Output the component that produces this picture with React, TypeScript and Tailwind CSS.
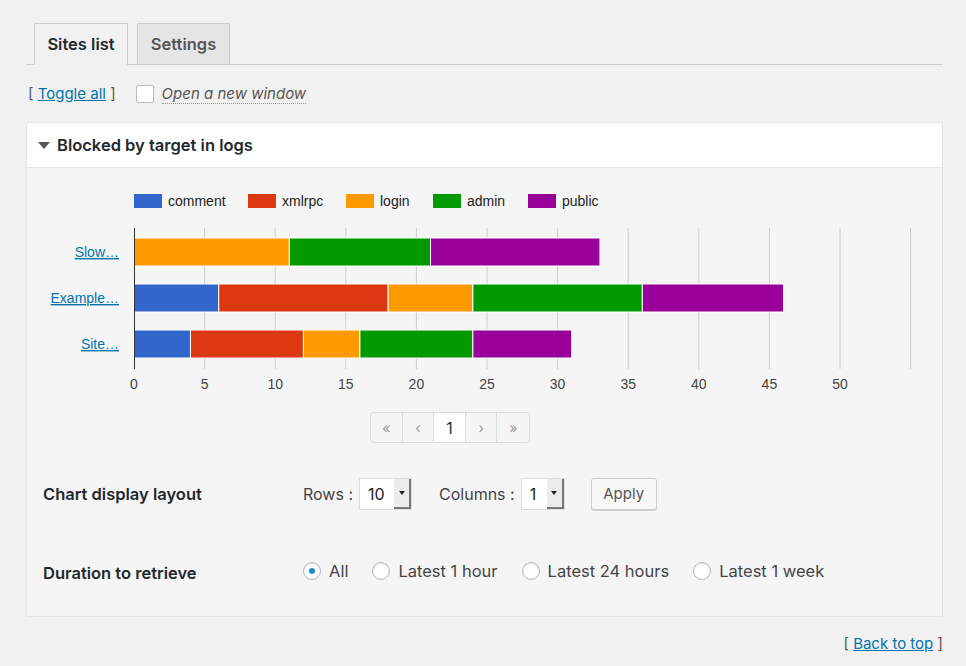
import React from "react";

type Row = { label: string; values: number[] };

const SERIES = [
	{ name: "comment", color: "#3366cc", x: 107 },
	{ name: "xmlrpc", color: "#dc3912", x: 221 },
	{ name: "login", color: "#ff9900", x: 319 },
	{ name: "admin", color: "#009900", x: 406 },
	{ name: "public", color: "#990099", x: 501 },
];

const ROWS: Row[] = [
	{ label: "Slow…", values: [0, 0, 11, 10, 12] },
	{ label: "Example…", values: [6, 12, 6, 12, 10] },
	{ label: "Site…", values: [4, 8, 4, 8, 7] },
];

const X0 = 107;
const UNIT = 14.12;
const ROW_TOP = [70, 116, 162];

const Chart: React.FC = () => {
	const ticks = Array.from({ length: 12 }, (_, i) => i * 5);
	return (
		<svg width={915} height={232} className="block" style={{ fontFamily: '"Liberation Sans", Arial, sans-serif' }}>
			{/* legend */}
			{SERIES.map((s) => (
				<g key={s.name}>
					<rect x={s.x} y={26} width={28} height={14} fill={s.color} />
					<text x={s.x + 34} y={38} fontSize={14} fill="#222">
						{s.name}
					</text>
				</g>
			))}

			{/* grid */}
			{ticks.slice(1).map((t) => (
				<line key={t} x1={X0 + t * UNIT} x2={X0 + t * UNIT} y1={60} y2={201} stroke="#cccccc" strokeWidth={1} />
			))}

			{/* bars */}
			{ROWS.map((row, ri) => {
				let acc = 0;
				return (
					<g key={row.label}>
						{row.values.map((v, si) => {
							const start = acc;
							acc += v;
							if (!v) return null;
							return (
								<rect
									key={si}
									x={X0 + start * UNIT}
									y={ROW_TOP[ri]}
									width={v * UNIT}
									height={28}
									fill={SERIES[si].color}
									stroke="#ffffff"
									strokeWidth={1}
								/>
							);
						})}
						<text
							x={92}
							y={ROW_TOP[ri] + 19}
							fontSize={14}
							fill="#0073aa"
							textAnchor="end"
							textDecoration="underline"
							className="underline">
							{row.label}
						</text>
					</g>
				);
			})}

			<line x1={X0 + 0.5} x2={X0 + 0.5} y1={60} y2={201} stroke="#333333" strokeWidth={1} />

			{/* axis labels */}
			{ticks.slice(0, 11).map((t) => (
				<text key={t} x={X0 + t * UNIT} y={221} fontSize={14} fill="#444" textAnchor="middle">
					{t}
				</text>
			))}
		</svg>
	);
};

const Select: React.FC<{ value: string; width: string }> = ({ value, width }) => (
	<div className={`flex h-8 ${width} items-stretch border border-[#dddddd] bg-white`}>
		<span className="flex flex-1 items-center pl-2 text-[16px] text-[#222]">{value}</span>
		<span className="flex w-[17px] items-center justify-center border-r-2 border-b-2 border-[#777] bg-[#ececec]">
			<span className="h-0 w-0 border-x-[3.5px] border-t-[4px] border-x-transparent border-t-[#222]" />
		</span>
	</div>
);

const Radio: React.FC<{ label: string; checked?: boolean }> = ({ label, checked }) => (
	<label className="flex items-center gap-2 text-[16.5px] text-[#444]">
		<span className="flex h-[18px] w-[18px] items-center justify-center rounded-full border border-[#b4b9be] bg-white shadow-[inset_0_1px_2px_rgba(0,0,0,0.1)]">
			{checked && <span className="h-[6px] w-[6px] rounded-full bg-[#1e8cbe]" />}
		</span>
		{label}
	</label>
);

const pageBtn = "flex w-8 items-center justify-center border-r border-[#dddddd] last:border-r-0";

export default function App() {
	return (
		<div
			className="min-h-[666px] bg-[#f1f1f1] pt-[23px] pl-[26px] pr-[23px] text-[#444]"
			style={{ fontFamily: 'Inter, "Liberation Sans", Arial, sans-serif' }}>
			{/* tabs */}
			<div className="flex h-[42px] items-end gap-[9px] border-b border-[#cccccc] pl-2">
				<div className="-mb-px flex h-[42px] w-[94px] items-center justify-center border border-b-0 border-[#cccccc] bg-[#f1f1f1] text-[16.5px] font-semibold text-[#23282d]">
					Sites list
				</div>
				<div className="-mb-px flex h-[42px] w-[93px] items-center justify-center border border-[#cccccc] bg-[#e5e5e5] text-[16.5px] font-semibold text-[#555]">
					Settings
				</div>
			</div>

			{/* toggles */}
			<div className="mt-5 flex h-[18px] items-center pl-[2px] text-[15px]">
				<span className="text-[#555]">
					[ <a className="text-[#0073aa] underline">Toggle all</a> ]
				</span>
				<span className="ml-5 h-[18px] w-[18px] rounded-[2px] border border-[#b4b9be] bg-white" />
				<span className="ml-2 border-b border-dotted border-[#999] text-[15px] leading-[18px] italic text-[#555]">
					Open a new window
				</span>
			</div>

			{/* panel */}
			<div className="mt-[19px] border border-[#e5e5e5] bg-[#f5f5f5]">
				<div className="flex h-[45px] items-center border-b border-[#e5e5e5] bg-white pl-[11px]">
					<span className="h-0 w-0 border-x-[6px] border-t-[7px] border-x-transparent border-t-[#555]" />
					<span className="ml-[7px] text-[16.5px] font-semibold text-[#23282d]">Blocked by target in logs</span>
				</div>

				<Chart />

				<div className="mt-3 ml-[343px] flex h-[31px] w-[160px] rounded-[4px] border border-[#dddddd] text-[14px] text-[#999]">
					<span className={pageBtn}>«</span>
					<span className={pageBtn}>‹</span>
					<span className={`${pageBtn} bg-white text-[16px] text-[#333]`}>1</span>
					<span className={pageBtn}>›</span>
					<span className={pageBtn}>»</span>
				</div>

				<div className="mt-[35px] grid grid-cols-[260px_1fr] items-center pl-4">
					<div className="text-[16.5px] font-semibold text-[#23282d]">Chart display layout</div>
					<div className="flex h-8 items-center text-[16px] text-[#444]">
						<span>Rows :</span>
						<div className="ml-[6px]">
							<Select value="10" width="w-[53px]" />
						</div>
						<span className="ml-[27px]">Columns :</span>
						<div className="ml-[6px]">
							<Select value="1" width="w-[44px]" />
						</div>
						<button className="ml-[26px] h-8 w-[66px] rounded-[3px] border border-[#cccccc] bg-[#f7f7f7] text-[15px] text-[#555] shadow-[0_1px_0_#ccc]">
							Apply
						</button>
					</div>
				</div>

				<div className="mt-[46px] mb-[30px] grid grid-cols-[260px_1fr] items-center pl-4">
					<div className="pt-[5px] text-[16.5px] font-semibold text-[#23282d]">Duration to retrieve</div>
					<div className="flex h-[22px] items-center gap-[24px]">
						<Radio label="All" checked />
						<Radio label="Latest 1 hour" />
						<Radio label="Latest 24 hours" />
						<Radio label="Latest 1 week" />
					</div>
				</div>
			</div>

			<div className="mt-4 text-right text-[15px] text-[#555]">
				[ <a className="text-[#0073aa] underline">Back to top</a> ]
			</div>
		</div>
	);
}
